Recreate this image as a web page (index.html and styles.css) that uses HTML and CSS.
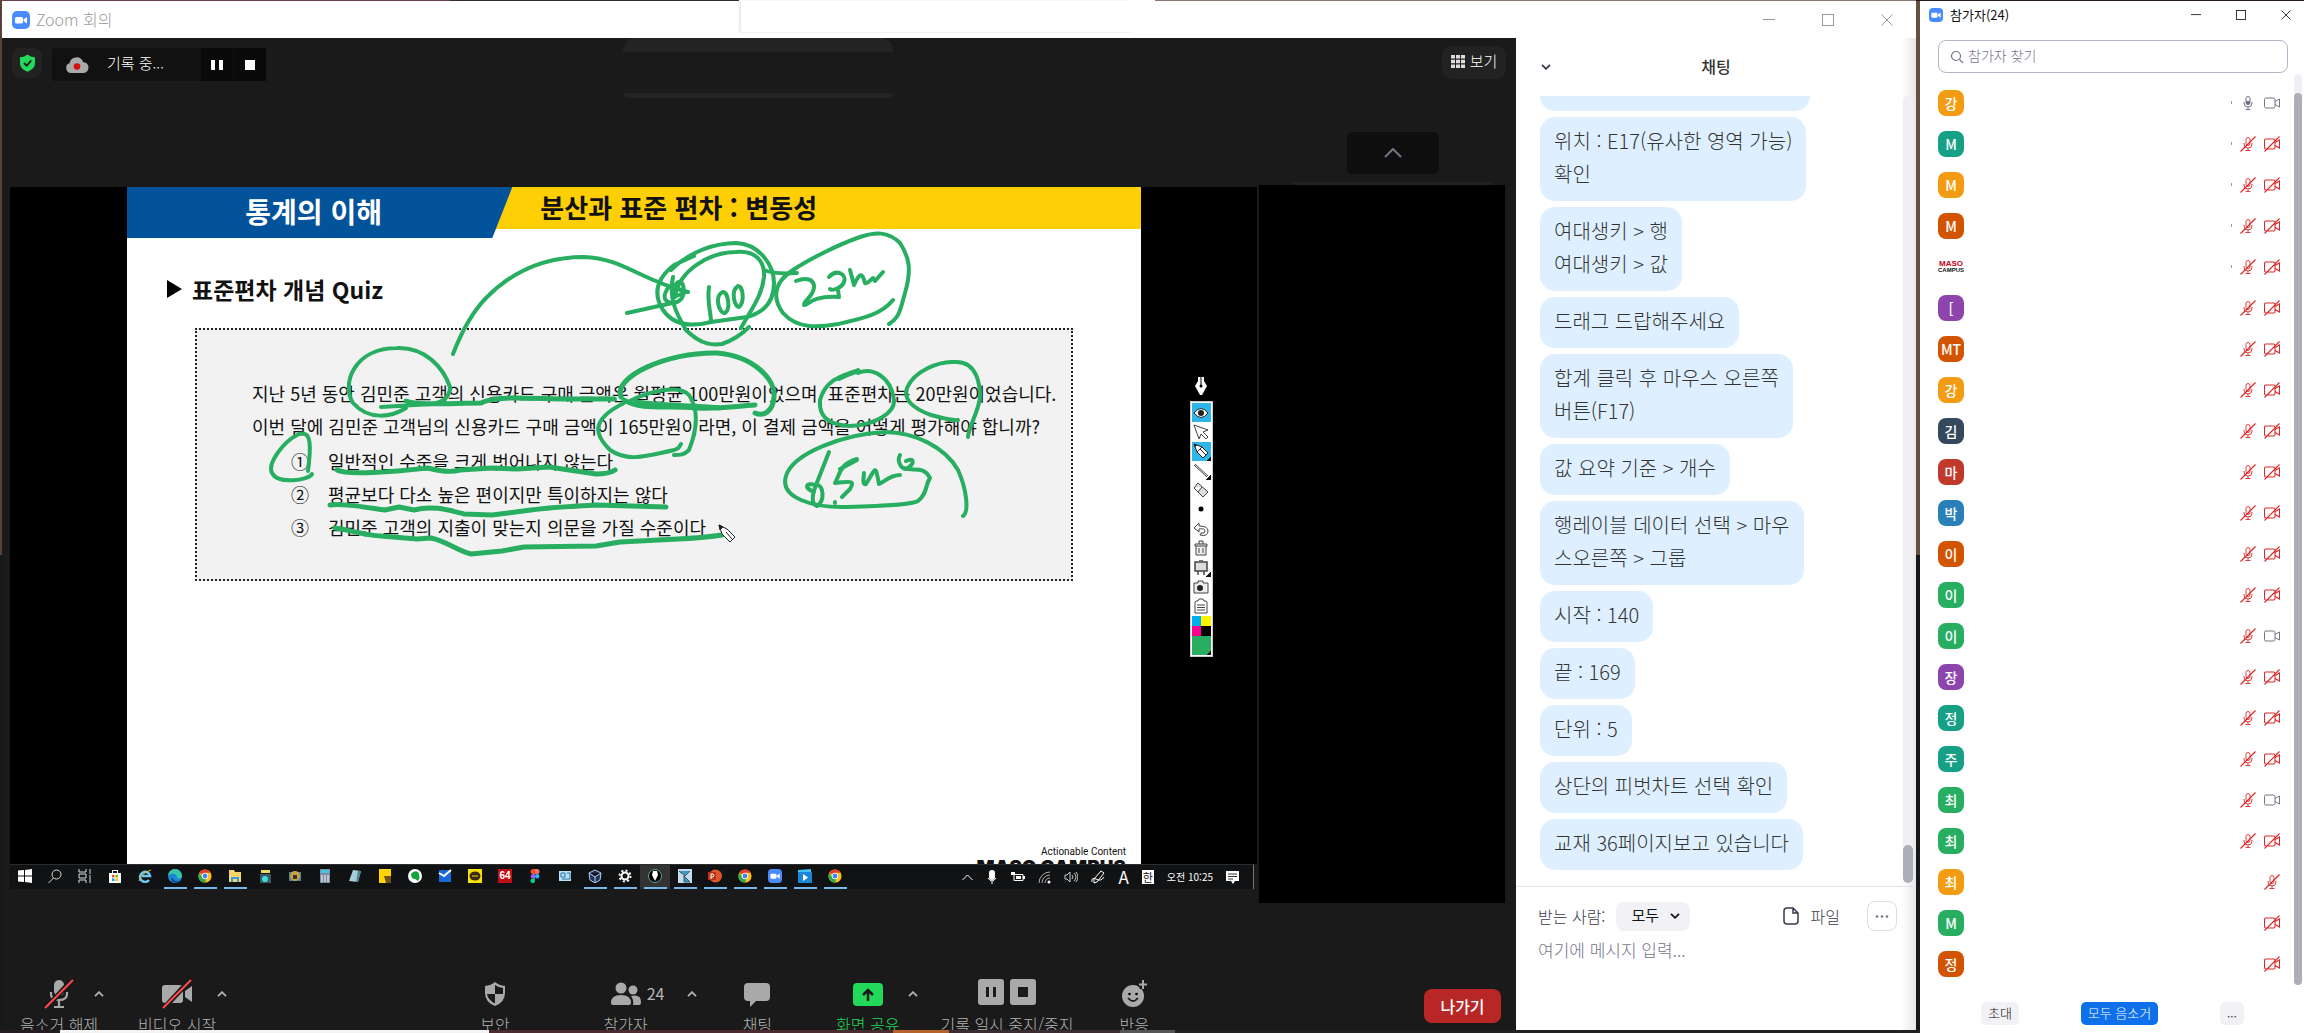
FILE: index.html
```html
<!DOCTYPE html>
<html lang="ko">
<head>
<meta charset="utf-8">
<title>Zoom 회의</title>
<link rel="stylesheet" href="styles.css">
</head>
<body>
<svg class="defs" aria-hidden="true">
  <symbol id="zoom" viewBox="0 0 18 18"><rect width="18" height="18" rx="5" fill="#4a8cff"/><rect x="3" y="6" width="8" height="6.500" rx="1.500" fill="#fff"/><path d="M11.500 8.500 15 6v6.500l-3.500-2.500z" fill="#fff"/></symbol>
  <symbol id="mic" viewBox="0 0 16 16"><g fill="none" stroke="currentColor"><rect x="6" y="1.500" width="4" height="8" rx="2"/><path d="M4 7v1a4 4 0 0 0 8 0V7M8 12v2.500M5.500 14.500h5"/></g><path d="M6 6h4v2a2 2 0 0 1-4 0z" fill="currentColor"/></symbol>
  <symbol id="mic-off" viewBox="0 0 16 16"><g fill="none" stroke="currentColor" stroke-width=".9"><rect x="6" y="1.500" width="4" height="8" rx="2"/><path d="M4 7v1a4 4 0 0 0 8 0V7M8 12v2.500M5.500 14.500h5"/><path d="M.5 15.500 15.500.5" stroke-width="1.200"/></g></symbol>
  <symbol id="cam" viewBox="0 0 16 16"><path d="M2 3h7.500q1.500 0 1.500 1.500v7q0 1.500-1.500 1.500H2Q.5 13 .5 11.500v-7Q.5 3 2 3zM11 6.500l4.500-2.500v8L11 9.500" fill="none" stroke="currentColor"/></symbol>
  <symbol id="cam-off" viewBox="0 0 16 16"><path d="M2 3h7.500q1.500 0 1.500 1.500v7q0 1.500-1.500 1.500H2Q.5 13 .5 11.500v-7Q.5 3 2 3zM11 6.500l4.500-2.500v8L11 9.500M.5 15.500 15.500.5" fill="none" stroke="currentColor" stroke-width="1.100"/></symbol>
  <symbol id="up" viewBox="0 0 10 6"><path d="M1 5.200 5 1.200l4 4" fill="none" stroke="currentColor" stroke-width="1.800"/></symbol>
  <symbol id="down" viewBox="0 0 10 6"><path d="m1 .8 4 4 4-4" fill="none" stroke="currentColor" stroke-width="1.800"/></symbol>
  <symbol id="min" viewBox="0 0 12 12"><path d="M0 5.500h12" stroke="currentColor"/></symbol>
  <symbol id="max" viewBox="0 0 12 12"><rect x=".5" y=".5" width="11" height="11" fill="none" stroke="currentColor"/></symbol>
  <symbol id="close" viewBox="0 0 12 12"><path d="m.5.5 11 11m0-11-11 11" stroke="currentColor"/></symbol>
  <symbol id="chrome" viewBox="0 0 16 16"><circle cx="8" cy="8" r="7.500" fill="#fbc116"/><path d="M8 8 1.500 4.200A7.500 7.500 0 0 1 14.500 4.200H8z" fill="#e33b2e"/><path d="M8 15.500A7.500 7.500 0 0 1 1.500 4.200L5 10.200l4.500 1.500z" fill="#2da94f"/><circle cx="8" cy="8" r="3.600" fill="#fff"/><circle cx="8" cy="8" r="2.800" fill="#4285f4"/></symbol>
</svg>

<div class="desktop">
<main class="meeting-window">
  <header class="titlebar">
    <svg width="18" height="18"><use href="#zoom"/></svg>
    <h1>Zoom 회의</h1>
    <div class="ghost-panel"></div>
    <nav class="win-controls">
      <button aria-label="최소화"><svg width="12" height="12"><use href="#min"/></svg></button>
      <button aria-label="최대화"><svg width="12" height="12"><use href="#max"/></svg></button>
      <button aria-label="닫기"><svg width="12" height="12"><use href="#close"/></svg></button>
    </nav>
  </header>

  <section class="meeting">
    <div class="topbar">
      <button class="shield" aria-label="암호화"><svg width="17" height="18" viewBox="0 0 17 18"><path d="M8.500.5c2 1.700 4.500 2.500 7.500 2.700v6c0 4-3 6.800-7.500 8.500C4 16 1 13.200 1 9.200v-6c3-.2 5.500-1 7.500-2.700z" fill="#22d959"/><path d="m5 9 2.700 2.700L12.200 6.500" stroke="#1a1a1a" stroke-width="1.800" fill="none"/></svg></button>
      <div class="recording">
        <svg width="24" height="18" viewBox="0 0 24 18"><path d="M6 17a5 5 0 0 1-1.500-9.700A7 7 0 0 1 18 6a5.500 5.500 0 0 1 0 11z" fill="#a9a9a9"/><circle cx="12" cy="10.500" r="3.300" fill="#d80f0f"/></svg>
        <span>기록 중...</span>
        <button aria-label="일시 중지"><svg width="12" height="10"><path d="M0 0h4v10H0zM8 0h4v10H8z" fill="#fff"/></svg></button>
        <button aria-label="중지"><svg width="10" height="10"><path d="M0 0h10v10H0z" fill="#fff"/></svg></button>
      </div>
      <div class="notice"><i></i><i></i></div>
      <div class="view-tools">
        <button class="view"><svg width="14" height="13" viewBox="0 0 14 13" fill="#ddd"><path d="M0 0h4v3.500H0zM5 0h4v3.500H5zM10 0h4v3.500h-4zM0 4.700h4v3.500H0zM5 4.700h4v3.500H5zM10 4.700h4v3.500h-4zM0 9.500h4V13H0zM5 9.500h4V13H5zM10 9.500h4V13h-4z"/></svg>보기</button>
        <button class="collapse" aria-label="접기"><svg width="18" height="10" viewBox="0 0 18 10"><path d="m1 9 8-8 8 8" fill="none" stroke="#747487" stroke-width="2"/></svg></button>
        <i class="strip"></i>
      </div>
    </div>

    <div class="stage">
      <div class="shared">
        <div class="screen">
          <article class="slide">
            <header class="slide-head"><h2>통계의 이해</h2><h3>분산과 표준 편차 : 변동성</h3></header>
            <h4><svg width="15" height="18"><path d="M0 0 15 9 0 18z"/></svg>표준편차 개념 Quiz</h4>
            <div class="quiz">
              <p>지난 5년 동안 김민준 고객의 신용카드 구매 금액은 월평균 100만원이었으며, 표준편차는 20만원이었습니다.</p>
              <p>이번 달에 김민준 고객님의 신용카드 구매 금액이 165만원이라면, 이 결제 금액을 어떻게 평가해야 합니까?</p>
              <ul>
                <li><span>①</span>일반적인 수준을 크게 벗어나지 않는다</li>
                <li><span>②</span>평균보다 다소 높은 편이지만 특이하지는 않다</li>
                <li><span>③</span>김민준 고객의 지출이 맞는지 의문을 가질 수준이다</li>
              </ul>
            </div>
            <footer><small>Actionable Content</small><b>MASO CAMPUS</b></footer>
            <svg class="ink" viewBox="127 187 1014 677" preserveAspectRatio="none">
              <g fill="none" stroke="#27ae60" stroke-width="4" stroke-linecap="round" stroke-linejoin="round">
                <path d="M453 354C463 328 476 308 487 297 514 270 548 257 584 257 622 258 642 281 688 292M627 313 677 302"/>
                <path d="M671 270C690 251 716 243 736 243 760 244 774 266 774 283 774 304 762 313 747 317L711 322C688 328 672 323 663 310 651 291 660 276 674 265L694 256"/>
                <path d="M675 297C679 270 710 252 736 252 756 250 765 262 764 277 762 296 752 308 741 328M673 277C668 300 678 316 686 330 702 346 714 345 722 344 734 340 741 335 749 327"/>
                <path d="M668 288C660 300 668 303 674 303 683 301 685 294 683 285 679 276 671 288 673 297M672 286l14 6-12 5M764 270C774 274 784 274 797 273"/>
                <path d="M709 287C707 301 710 308 711 320M723 292C713 296 720 315 725 313 731 309 728 292 723 292M738 286C730 291 735 308 739 307 745 302 743 286 738 286"/>
                <path d="M889 324C900 317 900 310 905 293 912 269 909 257 900 243 888 231 875 232 860 237 837 245 808 260 793 270 771 284 774 301 783 313 798 330 820 327 838 324 861 319 881 315 893 300"/>
                <path d="M796 281C806 277 814 279 814 287 814 296 804 300 804 305 808 306 811 295 839 297L838 290M829 277C837 268 847 275 844 282 842 288 832 291 830 289M850 270 854 285C859 274 862 271 865 283 868 284 869 281 873 278L875 281 883 272"/>
                <path d="M406 408C392 417 369 421 353 403 341 384 354 348 397 348 425 347 443 367 450 387 450 397 444 402 432 404L381 407"/>
                <path stroke-width="5" d="M406 401C419 406 452 403 481 403 497 394 544 400 580 399L614 399"/>
                <path stroke-width="5" d="M621 397C613 377 666 352 717 353 754 356 776 380 774 397 773 411 764 417 755 413M624 400C641 411 670 405 695 408 725 409 735 406 755 405M636 402C670 407 700 405 720 408"/>
                <path d="M628 402C650 390 680 385 689 395 699 410 697 430 689 450 684 455 680 455 674 455M624 403C588 421 596 436 610 450 625 460 637 459 674 450 679 448 678 449 681 444"/>
                <path d="M312 474C309 480 278 485 272 473 267 463 284 441 299 434 312 430 311 448 308 471"/>
                <path stroke-width="5" d="M337 470C348 476 400 471 428 468 439 471 450 473 460 470L492 468 517 469 549 467 596 474Q609 474 615 470M330 505C345 503 370 508 385 510L399 507 414 510C432 505 448 510 464 514L492 515 531 510C552 507 575 506 596 505L666 507M335 528C350 530 367 536 381 536L417 539 431 538C446 541 456 550 471 554L502 551 524 547 596 546 620 542 678 539Q702 538 722 535"/>
                <path d="M839 379C852 372 861 372 858 370 842 376 826 379 820 400 818 424 840 425 850 426 875 425 895 413 894 400 891 376 872 367 858 373"/>
                <path d="M958 420C952 421 943 418 931 415 909 407 904 397 907 388 914 371 939 361 954 362 978 360 980 387 980 397 979 411 968 428 968 437"/>
                <path d="M963 516C969 512 967 490 958 470 945 447 914 432 885 432 844 434 793 453 786 476 779 499 816 508 847 507 882 506 911 505 918 501 928 493 925 485 930 478 923 465 914 472 904 468"/>
                <path d="M829 452 816 485C805 482 804 488 814 492M816 485C824 484 825 501 817 506 811 504 812 495 816 485M857 459C839 464 840 475 835 483 848 482 856 479 850 489L842 497M840 469 857 460M835 502v1M864 473C863 482 863 485 866 484 877 466 875 465 879 484 884 482 890 475 900 475M900 455C896 462 903 472 908 468 915 463 914 457 906 461"/>
              </g>
              <g fill="#fff" stroke="#222"><path d="m719 525 8 4 8 8-5 5-8-8z"/><path d="m726 532 6 7M719 525l4 2-3 3z" fill="#222"/></g>
            </svg>
          </article>
          <aside class="pen-tools">
            <svg width="14" height="19" viewBox="0 0 14 19"><path d="M4 0h6v4l3 5-5 9H6L1 9l3-5z" fill="#fff"/><circle cx="7" cy="9" r="1.500"/><path d="M7 0v8" stroke="#000"/></svg>
            <div class="palette">
              <button class="on" aria-label="보기"><svg width="16" height="16" viewBox="0 0 16 16"><path d="M1 8q7-9 14 0-7 9-14 0z" fill="#fff" stroke="#222"/><circle cx="8" cy="8" r="3" fill="#222"/></svg></button>
              <button aria-label="선택"><svg width="16" height="16" viewBox="0 0 16 16"><path d="m1 1 14 5-5 2 5 5-2 2-5-5-2 5z" fill="#fff" stroke="#444"/></svg></button>
              <button class="on more" aria-label="펜"><svg width="16" height="16" viewBox="0 0 16 16"><path d="m1 1 8 3 6 6-5 5-6-6zM7 6l6 6M4 9l5-5" fill="#fff" stroke="#222"/><path d="m1 1 3 1-2 2z"/></svg></button>
              <button class="more" aria-label="선"><svg width="16" height="16" viewBox="0 0 16 16"><path d="m1 2 13 12M2 1l13 12" stroke="#444"/></svg></button>
              <button aria-label="지우개"><svg width="16" height="16" viewBox="0 0 16 16"><path d="m5 1 10 9-5 5L1 6zM1 6l4 4 4-5" fill="#ddd" stroke="#444"/></svg></button>
              <button aria-label="굵기"><svg width="16" height="16"><circle cx="8" cy="8" r="2.500"/></svg></button>
              <button aria-label="실행 취소"><svg width="16" height="16" viewBox="0 0 16 16"><path d="M6 2 1 7l5 4V8q6-1 6 2 0 3-4 2l-1 2q8 2 8-4 0-5-9-5z" fill="#fff" stroke="#444"/></svg></button>
              <button aria-label="삭제"><svg width="16" height="16" viewBox="0 0 16 16"><path d="M2 4h12v2H2zM3 6v9h10V6M6 4V1h4v3M6 8v5m4-5v5" fill="#eee" stroke="#444"/></svg></button>
              <button class="more" aria-label="칠판"><svg width="16" height="16" viewBox="0 0 16 16"><path d="M2 2h12v9H2zM5 11v4m6-4v4M6 0h4" fill="#ddd" stroke="#444" stroke-width="1.500"/></svg></button>
              <button aria-label="캡처"><svg width="16" height="16" viewBox="0 0 16 16"><path d="M1 4h4V2h5v2h5v10H1z" fill="#eee" stroke="#444"/><circle cx="7" cy="9" r="3" fill="#222"/></svg></button>
              <button aria-label="클립보드"><svg width="16" height="16" viewBox="0 0 16 16"><path d="M3 3h2l1-2h4l1 2h2l1 1v11H2V4zM4 7h8M4 9.500h8M4 12h8" fill="#fff" stroke="#444"/></svg></button>
              <div class="swatches"><i class="cyan"></i><i class="yellow"></i><i class="pink"></i><i class="black"></i><i class="green more"></i></div>
            </div>
          </aside>
        </div>

        <div class="taskbar">
          <ul class="apps">
            <li><svg width="14" height="14" viewBox="0 0 14 14"><path d="M0 1.500 6 1v5.500H0zM7 1l7-1v6.500H7zM0 7.500h6V13l-6-.5zM7 7.500h7V14l-7-1z" fill="#fff"/></svg></li>
            <li><svg width="14" height="14" viewBox="0 0 14 14"><circle cx="8.500" cy="5.500" r="4.500" fill="none" stroke="#ddd"/><path d="m5.500 9-5 5" stroke="#ddd"/></svg></li>
            <li><svg width="14" height="14" viewBox="0 0 14 14"><path d="M1 0v3h7V0M1 5h7v4H1zM1 14v-3h7v3M12 0v3m0 3v8M11 4h2" fill="none" stroke="#ddd"/></svg></li>
            <li><svg width="14" height="14" viewBox="0 0 14 14"><path d="M1 4h12v10H1zM4 4V1h6v3H9V2H5v2z" fill="#fff"/><path d="M4 6h2.500v2.500H4z" fill="#f25022"/><path d="M7.500 6H10v2.500H7.500z" fill="#7fba00"/><path d="M4 9.500h2.500V12H4z" fill="#00a4ef"/><path d="M7.500 9.500H10V12H7.500z" fill="#ffb900"/></svg></li>
            <li><svg width="14" height="14" viewBox="0 0 14 14"><path d="M11 11A5 5 0 1 1 12 7H4" fill="none" stroke="#6cc8f4" stroke-width="2.500"/><path d="M1 12Q3 4 13 1" stroke="#e6c02e" fill="none"/></svg></li>
            <li class="run"><svg width="14" height="14" viewBox="0 0 14 14"><circle cx="7" cy="7" r="7" fill="#1b87d2"/><path d="M0 7a7 7 0 0 1 14 0c0 3-5 3-5 1 0-4-7-4-9-1z" fill="#38c6a6"/><path d="M5 9q0 4 7 3-6 4-9-2z" fill="#0b3f86"/></svg></li>
            <li class="run"><svg width="14" height="14"><use href="#chrome"/></svg></li>
            <li class="run"><svg width="14" height="14" viewBox="0 0 14 14"><path d="M1 1h5l1 2h6v10H1z" fill="#f9d46b"/><path d="M3 8h8v5H9v-3H5v3H3z" fill="#3a9be0"/></svg></li>
            <li><svg width="14" height="14" viewBox="0 0 14 14"><path d="M3 1h9v3H3z" fill="#e9dc62"/><path d="M2 5h11v9H2z" fill="#3c5a5c"/><circle cx="7" cy="10" r="3" fill="#38e0e6"/></svg></li>
            <li><svg width="14" height="14" viewBox="0 0 14 14"><path d="M1 3h12v9H1z" fill="#4d7f9e"/><circle cx="7" cy="7" r="5" fill="#caa13e"/><path d="M5 6h4v4H5z" fill="#333"/></svg></li>
            <li><svg width="14" height="14" viewBox="0 0 14 14"><path d="M2 0h10v14H2z" fill="#7a8da0"/><path d="M3 1h8v3H3z" fill="#44c3e8"/><path d="M4 6v7m3-7v7m3-7v7" stroke="#fff"/></svg></li>
            <li><svg width="14" height="14" viewBox="0 0 14 14"><path d="m5 1 8 1-3 11-9-1z" fill="#a5cfd6"/><path d="m10 2 3 0-3 11-2 0z" fill="#51828f"/></svg></li>
            <li><svg width="14" height="14"><path d="M1 0h12v14H1z" fill="#ffd400"/><path d="M6 7h7v7H8z" fill="#6b5216"/></svg></li>
            <li><svg width="14" height="14"><circle cx="7" cy="7" r="7" fill="#fff"/><path d="M3 5q3-4 7-2 3 5 0 9l-3-2q-4 0-4-5z" fill="#12a33a"/></svg></li>
            <li><svg width="14" height="14"><path d="M1 1h12v12H1z" fill="#1769d8"/><path d="m1 4 5 3 7-6" fill="none" stroke="#fff" stroke-width="2"/></svg></li>
            <li><svg width="14" height="14"><path d="M0 0h14v14H0z" fill="#fae100"/><ellipse cx="7" cy="7" rx="5.500" ry="4.500" fill="#3a2a1c"/><path d="M4 7h6" stroke="#fae100"/></svg></li>
            <li><span class="n64">64</span></li>
            <li><svg width="14" height="14" viewBox="0 0 14 14"><path d="M7 0v5H5a2.500 2.500 0 0 1 0-5z" fill="#f24e1e"/><path d="M7 0h2a2.500 2.500 0 0 1 0 5H7z" fill="#ff7262"/><path d="M7 5v4.500H5A2.200 2.200 0 0 1 5 5z" fill="#a259ff"/><circle cx="9.200" cy="7.200" r="2.200" fill="#1abcfe"/><path d="M7 9.500V12a2.300 2.300 0 1 1-2-2.500z" fill="#0acf83"/></svg></li>
            <li><svg width="14" height="14"><path d="M1 2h12v10H1z" fill="#b9e2f8"/><path d="M3 4h4v4H3zM9 4h3v6H4" fill="none" stroke="#2673a8"/></svg></li>
            <li class="run"><svg width="14" height="14"><path d="m7 1 6 3-1 7-5 3-5-3-1-7zM1 4l6 4 6-4M7 8v6" fill="#1e3357" stroke="#b7cdf0"/></svg></li>
            <li class="run"><svg width="14" height="14"><circle cx="7" cy="7" r="3.500" fill="none" stroke="#fff" stroke-width="2"/><circle cx="7" cy="7" r="5.500" fill="none" stroke="#fff" stroke-width="2" stroke-dasharray="2 2.300"/></svg></li>
            <li class="run active"><svg width="14" height="14"><circle cx="7" cy="7" r="6.500" stroke="#66a0a5"/><path d="M5 2h4l1 4-3 6-3-6z" fill="#fff"/></svg></li>
            <li class="run"><svg width="14" height="14"><path d="M0 0h14v14H0z" fill="#c8dbe6"/><path d="m1 2 6 5 5-5M6 7l6 6H6z" fill="#3a97c7" stroke="#33546b"/></svg></li>
            <li class="run"><svg width="14" height="14"><circle cx="7.500" cy="7" r="6.500" fill="#e0562c"/><path d="M0 3h8v8H0z" fill="#b83214"/><path d="M3 10V5h2q2 1 0 3H3" fill="none" stroke="#fff"/></svg></li>
            <li class="run"><svg width="14" height="14"><use href="#chrome"/></svg></li>
            <li class="run"><svg width="14" height="14"><use href="#zoom"/></svg></li>
            <li class="run"><svg width="14" height="14"><path d="M0 3h14v11H0z" fill="#1c86d6"/><path d="m0 1 13-1v3H0z" fill="#3ec3f0"/><path d="m5 5 5 3.500L5 12z" fill="#fff"/></svg></li>
            <li class="run"><svg width="14" height="14"><use href="#chrome"/></svg></li>
          </ul>
          <ul class="tray">
            <li><svg width="11" height="7"><path d="m.5 6 5-5 5 5" fill="none" stroke="#fff"/></svg></li>
            <li><svg width="12" height="14"><rect x="3" width="6" height="10" rx="3" fill="#fff"/><path d="M2 8q4 6 8 0M6 11v3" stroke="#fff" fill="none"/></svg></li>
            <li><svg width="14" height="12"><path d="M3 3.500h9v6H3z" fill="none" stroke="#fff"/><path d="M5 5h5v3H5zM12 5h2v3h-2zM0 1h4v3H0z" fill="#fff"/></svg></li>
            <li><svg width="13" height="13"><path d="M1 12A11 11 0 0 1 12 1M4 12a8 8 0 0 1 8-8M7 12a5 5 0 0 1 5-5" fill="none" stroke="#aaa"/><circle cx="11" cy="11" r="1.500" fill="#fff"/></svg></li>
            <li><svg width="14" height="12"><path d="M1 4h2l3-3v10L3 8H1zM8 4q2 2 0 4M10 2q4 4 0 8M12 1q4 5 0 10" fill="none" stroke="#ccc"/></svg></li>
            <li><svg width="14" height="14"><path d="M3 9 10 1l3 2-7 9-3 1zM1 12q-1-5 4-3 5 3 8-2" fill="none" stroke="#fff"/></svg></li>
            <li class="ime">A</li>
            <li class="han">한</li>
            <li class="clock">오전 10:25</li>
            <li><svg width="13" height="13"><path d="M0 0h13v10H9l-2 3-2-3H0z" fill="#fff"/><path d="M2 3h9M2 5.500h9M2 8h5" stroke="#333"/></svg></li>
          </ul>
        </div>
      </div>
      <div class="video-strip"></div>
    </div>

    <div class="toolbar">
      <div class="group left">
        <button class="tool"><svg width="30" height="30" viewBox="0 0 30 30"><rect x="10" y="1" width="10" height="16" rx="5" fill="#a9a9a9"/><path d="M7 13v2q0 6 8 6t8-6v-2M15 21v6M10 28h10" fill="none" stroke="#a9a9a9" stroke-width="2.200"/><path d="M2 29 28 1" stroke="#1a1a1a" stroke-width="5"/><path d="M1 29 29 1" stroke="#ff4a4a" stroke-width="2"/></svg><span>음소거 해제</span></button>
        <button class="caret" aria-label="오디오 옵션"><svg width="10" height="6"><use href="#up"/></svg></button>
        <button class="tool"><svg width="32" height="30" viewBox="0 0 32 30"><rect x="1" y="6" width="21" height="18" rx="3" fill="#a9a9a9"/><path d="m24 12 7-5v16l-7-5z" fill="#a9a9a9"/><path d="M3 29 29 1" stroke="#1a1a1a" stroke-width="5"/><path d="M2 29 30 1" stroke="#ff4a4a" stroke-width="2"/></svg><span>비디오 시작</span></button>
        <button class="caret" aria-label="비디오 옵션"><svg width="10" height="6"><use href="#up"/></svg></button>
      </div>
      <div class="group middle">
        <button class="tool"><svg width="24" height="26" viewBox="0 0 24 26"><path d="M12 1q4 3.500 10 4v7q0 9-10 13Q2 21 2 12V5q6-.5 10-4z" fill="#a9a9a9"/><path d="M12 4v9h8V7q-4 0-8-3zM12 13H4q1 6 8 9.500z" fill="#1a1a1a"/></svg><span>보안</span></button>
        <button class="tool people"><svg width="68" height="26" viewBox="0 0 68 26"><g fill="#a9a9a9"><circle cx="29" cy="7" r="5.500"/><circle cx="41" cy="9" r="4.500"/><path d="M19 22q0-8 10-8t10 8q0 2-2 2H21q-2 0-2-2zM41 24q1-5-2-9 10-2 10 6 0 3-2 3z"/></g></svg><b>24</b><span>참가자</span></button>
        <button class="caret" aria-label="참가자 옵션"><svg width="10" height="6"><use href="#up"/></svg></button>
        <button class="tool"><svg width="26" height="26" viewBox="0 0 26 26"><path d="M4 2h18q4 0 4 4v10q0 4-4 4H12l-6 6v-6H4q-4 0-4-4V6q0-4 4-4z" fill="#a9a9a9"/></svg><span>채팅</span></button>
        <button class="tool share"><svg width="30" height="26" viewBox="0 0 30 26"><rect y="2" width="30" height="23" rx="4" fill="#22d959"/><path d="M15 20V9m-5 5 5-5 5 5" fill="none" stroke="#1a1a1a" stroke-width="2.500"/></svg><span>화면 공유</span></button>
        <button class="caret" aria-label="공유 옵션"><svg width="10" height="6"><use href="#up"/></svg></button>
        <button class="tool"><svg width="58" height="30" viewBox="0 0 58 30"><rect width="26" height="26" rx="3" fill="#a9a9a9"/><rect x="32" width="26" height="26" rx="3" fill="#a9a9a9"/><path d="M8 8h3v10H8zM15 8h3v10h-3zM40 8h10v10H40z" fill="#1a1a1a"/></svg><span>기록 일시 중지/중지</span></button>
        <button class="tool"><svg width="26" height="30" viewBox="0 0 26 30"><circle cx="12" cy="17" r="11" fill="#a9a9a9"/><circle cx="8.500" cy="15" r="1.300"/><circle cx="15.500" cy="15" r="1.300"/><path d="M7 19q5 6 10 0" fill="none" stroke="#1a1a1a" stroke-width="1.800"/><path d="M21 1v9M17 5.500h9" stroke="#1a1a1a" stroke-width="5"/><path d="M22 1v9M18 5.500h8" stroke="#a9a9a9" stroke-width="2"/></svg><span>반응</span></button>
      </div>
      <button class="leave">나가기</button>
    </div>
  </section>

  <section class="chat">
    <header><button aria-label="접기"><svg width="10" height="6"><use href="#down"/></svg></button><h2>채팅</h2></header>
    <div class="chat-body">
      <ol class="messages">
        <li class="scrolled" aria-hidden="true"></li>
        <li>위치 : E17(유사한 영역 가능)<br>확인</li>
        <li>여대생키 &gt; 행<br>여대생키 &gt; 값</li>
        <li>드래그 드랍해주세요</li>
        <li>합계 클릭 후 마우스 오른쪽<br>버튼(F17)</li>
        <li>값 요약 기준 &gt; 개수</li>
        <li>행레이블 데이터 선택 &gt; 마우<br>스오른쪽 &gt; 그룹</li>
        <li>시작 : 140</li>
        <li>끝 : 169</li>
        <li>단위 : 5</li>
        <li>상단의 피벗차트 선택 확인</li>
        <li>교재 36페이지보고 있습니다</li>
      </ol>
      <div class="track"><i></i></div>
    </div>
    <form class="composer">
      <div class="to">
        <label for="to">받는 사람:</label>
        <div class="pick"><select id="to"><option>모두</option></select><svg width="10" height="6"><use href="#down"/></svg></div>
        <button type="button" class="file"><svg width="16" height="18" viewBox="0 0 16 18"><path d="M4 1h6l5 5v8q0 3-3 3H4q-3 0-3-3V4q0-3 3-3zM10 1v5h5" fill="none" stroke="#39394d" stroke-width="1.500"/></svg>파일</button>
        <button type="button" class="dots" aria-label="더 보기"><svg width="14" height="3" fill="#747487"><circle cx="2" cy="1.500" r="1.300"/><circle cx="7" cy="1.500" r="1.300"/><circle cx="12" cy="1.500" r="1.300"/></svg></button>
      </div>
      <textarea aria-label="메시지" placeholder="여기에 메시지 입력..."></textarea>
    </form>
  </section>
</main>

<aside class="people-window">
  <header class="titlebar">
    <svg width="14" height="14"><use href="#zoom"/></svg>
    <h2>참가자(24)</h2>
    <nav class="win-controls">
      <button aria-label="최소화"><svg width="10" height="10"><use href="#min"/></svg></button>
      <button aria-label="최대화"><svg width="10" height="10"><use href="#max"/></svg></button>
      <button aria-label="닫기"><svg width="10" height="10"><use href="#close"/></svg></button>
    </nav>
  </header>
  <label class="search"><svg width="14" height="14" viewBox="0 0 14 14"><circle cx="6" cy="6" r="4.500" fill="none" stroke="#747487" stroke-width="1.200"/><path d="m9.500 9.500 3.500 3.500" stroke="#747487" stroke-width="1.200"/></svg><input type="text" aria-label="참가자 찾기" placeholder="참가자 찾기"></label>
  <div class="people-body">
    <ul class="roster">
      <li><span class="av orange">강</span><i class="tick"></i><svg class="gray"><use href="#mic"/></svg><svg class="gray"><use href="#cam"/></svg></li>
      <li><span class="av teal">M</span><i class="tick"></i><svg><use href="#mic-off"/></svg><svg><use href="#cam-off"/></svg></li>
      <li><span class="av orange">M</span><i class="tick"></i><svg><use href="#mic-off"/></svg><svg><use href="#cam-off"/></svg></li>
      <li><span class="av rust">M</span><i class="tick"></i><svg><use href="#mic-off"/></svg><svg><use href="#cam-off"/></svg></li>
      <li><span class="av maso"><b>MASO</b><em>CAMPUS</em></span><i class="tick"></i><svg><use href="#mic-off"/></svg><svg><use href="#cam-off"/></svg></li>
      <li><span class="av purple">[</span><svg><use href="#mic-off"/></svg><svg><use href="#cam-off"/></svg></li>
      <li><span class="av rust">MT</span><svg><use href="#mic-off"/></svg><svg><use href="#cam-off"/></svg></li>
      <li><span class="av orange">강</span><svg><use href="#mic-off"/></svg><svg><use href="#cam-off"/></svg></li>
      <li><span class="av navy">김</span><svg><use href="#mic-off"/></svg><svg><use href="#cam-off"/></svg></li>
      <li><span class="av red">마</span><svg><use href="#mic-off"/></svg><svg><use href="#cam-off"/></svg></li>
      <li><span class="av blue">박</span><svg><use href="#mic-off"/></svg><svg><use href="#cam-off"/></svg></li>
      <li><span class="av rust">이</span><svg><use href="#mic-off"/></svg><svg><use href="#cam-off"/></svg></li>
      <li><span class="av green">이</span><svg><use href="#mic-off"/></svg><svg><use href="#cam-off"/></svg></li>
      <li><span class="av green">이</span><svg><use href="#mic-off"/></svg><svg class="gray"><use href="#cam"/></svg></li>
      <li><span class="av purple">장</span><svg><use href="#mic-off"/></svg><svg><use href="#cam-off"/></svg></li>
      <li><span class="av teal">정</span><svg><use href="#mic-off"/></svg><svg><use href="#cam-off"/></svg></li>
      <li><span class="av teal">주</span><svg><use href="#mic-off"/></svg><svg><use href="#cam-off"/></svg></li>
      <li><span class="av green">최</span><svg><use href="#mic-off"/></svg><svg class="gray"><use href="#cam"/></svg></li>
      <li><span class="av green">최</span><svg><use href="#mic-off"/></svg><svg><use href="#cam-off"/></svg></li>
      <li><span class="av orange">최</span><svg><use href="#mic-off"/></svg></li>
      <li><span class="av green">M</span><svg><use href="#cam-off"/></svg></li>
      <li><span class="av rust">정</span><svg><use href="#cam-off"/></svg></li>
    </ul>
    <div class="track"><i></i></div>
  </div>
  <footer><button>초대</button><button class="primary">모두 음소거</button><button>...</button></footer>
</aside>
</div>
</body>
</html>
```
FILE: styles.css
```css
* { box-sizing: border-box; }
body { margin: 0; font-family: "Noto Sans CJK KR", "Noto Sans", sans-serif; font-size: 16px; line-height: 24px; color: #333; }
h1, h2, h3, h4, p, ul, ol { margin: 0; padding: 0; font-weight: 400; }
ul, ol { list-style: none; }
button, input, select, textarea { font: inherit; color: inherit; border: 0; background: none; padding: 0; margin: 0; }
svg { display: block; flex: none; }
.defs { position: absolute; width: 0; height: 0; }

/* Desktop behind the two windows */
.desktop {
  display: grid; grid-template: minmax(0, 1fr) / minmax(0, 1fr) 384px; column-gap: 4px;
  height: 100vh; min-height: 900px; padding: 1px 0 0 2px; overflow: hidden;
  background:
    linear-gradient(90deg, #241e22 0 60px, #f4f4f4 0 489px, #4a2c30 0 893px, #b5622a 0 949px, #3a2c30 0 1120px, #555 0 1175px, #222 0) bottom / 100% 3px no-repeat,
    linear-gradient(90deg, #6b4048 0 450px, #332c36 0 739px, #fff 0 1155px, #8a7a72 0 1916px, #24171c 0) top / 100% 1px no-repeat,
    linear-gradient(90deg, #5c4038 0 960px, #65503f 0) top / 100% 555px no-repeat,
    #17181c;
}

.titlebar { display: flex; align-items: center; background: #fff; }
.win-controls { display: flex; margin-left: auto; }
.win-controls button { display: grid; place-items: center; }

/* Meeting window */
.meeting-window { display: grid; grid-template: 37px minmax(0, 1fr) / minmax(0, 1fr) 400px; margin-bottom: 3px; min-height: 0; }
.meeting-window > .titlebar { grid-column: 1 / -1; padding-left: 10px; color: #999; }
.meeting-window h1 { font-size: 16px; line-height: 22px; font-weight: 300; margin: 0 0 2px 6px; }
.meeting-window .win-controls button { width: 59px; height: 36px; }
.ghost-panel { width: 390px; height: 31px; align-self: flex-start; margin-left: 629px; box-shadow: -2px 0 2px #e8e8e8, 0 1px #f8f8f8; }
.meeting { display: grid; grid-template-rows: 147px minmax(0, 1fr) 127px; background: #1a1a1a; color: #fff; overflow: hidden; }

.topbar { display: flex; align-items: flex-start; padding: 10px 10px 0; }
.shield { display: grid; place-items: center; width: 30px; height: 30px; border-radius: 8px; background: #222; }
.recording { display: flex; align-items: center; width: 214px; height: 33px; margin-left: 10px; padding-left: 13px; background: #111; border-radius: 3px; font-size: 15px; font-weight: 300; gap: 1px; }
.recording span { flex: 1; padding: 0 0 4px 17px; }
.recording button { display: grid; place-items: center; width: 32px; height: 33px; background: #0a0a0a; }
.notice { display: flex; flex-direction: column; justify-content: space-between; width: 270px; height: 60px; margin: -10px 0 0 357px; }
.notice i { height: 14px; background: #242424; border-radius: 12px 12px 0 0; }
.notice i + i { height: 5px; border-radius: 0 0 8px 8px; }
.view-tools { display: flex; flex-direction: column; align-items: flex-end; margin: -2px 0 0 auto; height: 139px; }
.view { display: flex; align-items: center; justify-content: center; gap: 5px; width: 64px; height: 33px; padding-bottom: 3px; background: #222; border-radius: 10px; font-size: 15px; font-weight: 300; }
.collapse { display: grid; place-items: center; width: 92px; height: 42px; margin: 53px 67px 0 0; background: #0e0e0e; border-radius: 5px; }
.strip { width: 200px; height: 3px; margin: auto 13px 0 0; background: #222; }

.stage { display: flex; gap: 2px; padding: 0 11px 0 8px; min-height: 0; }
.video-strip { flex: none; width: 246px; background: #000; }
.shared { flex: 1; min-width: 0; display: flex; flex-direction: column; padding: 2px 0 14px; }
.screen { flex: 1; min-height: 0; display: flex; background: #000; padding-left: 117px; }

/* Slide */
.slide { position: relative; flex: 1; min-width: 0; display: flex; flex-direction: column; background: #fff; color: #111; overflow: hidden; }
.slide-head { display: flex; height: 51px; }
.slide-head h2 { position: relative; z-index: 1; width: 38%; padding-right: 12px; background: #02539a; color: #fff; text-align: center; font-size: 28px; line-height: 48px; font-weight: 700; clip-path: polygon(0 0, 100% 0, calc(100% - 20px) 100%, 0 100%); }
.slide-head h3 { flex: 1; height: 42px; margin-left: -20px; padding-left: 48px; background: #ffcf06; font-size: 26px; line-height: 40px; font-weight: 700; }
.slide h4 { display: flex; align-items: center; gap: 10px; margin: 35px 0 0 40px; font-size: 23px; line-height: 32px; font-weight: 700; }
.quiz { flex: none; margin: 23px 68px 0; height: 253px; padding: 47px 0 0 55px; border: 2px dotted #222; background: #f2f2f2; font-size: 18px; line-height: 33px; font-weight: 300; white-space: nowrap; }
.quiz ul { padding: 2px 0 0 39px; }
.quiz span { display: inline-block; width: 37px; }
.slide footer { display: flex; flex-direction: column; align-items: flex-end; height: 18px; margin-top: auto; padding-right: 15px; }
.slide small { font: 10px/12px Roboto, sans-serif; flex: none; }
.slide footer b { flex: none; font: 900 19px/20px Inter, sans-serif; }
.ink { position: absolute; inset: 0; width: 100%; height: 100%; }

.pen-tools { display: flex; flex-direction: column; align-items: center; gap: 5px; width: 116px; padding: 190px 0 0 4px; }
.palette { width: 23px; padding: 1px; background: #fff; border: 1px solid #ccc; display: grid; grid-template-rows: repeat(11, 1fr) 39px; height: 256px; }
.palette button { position: relative; display: grid; place-items: center; min-height: 0; }
.palette .on { background: #2fb6e9; }
.palette .more { background-image: linear-gradient(135deg, transparent 50%, #111 50%); background-size: 5px 5px; background-position: right bottom; background-repeat: no-repeat; }
.swatches { display: grid; grid-template: 10px 10px 19px / 1fr 1fr; }
.cyan { background: #00aeef; } .yellow { background: #fff200; } .pink { background: #ff0090; } .black { background: #000; }
.swatches .green { grid-column: 1 / -1; background-color: #27ae60; }

/* Windows taskbar inside the share */
.taskbar { flex: none; display: flex; align-items: stretch; justify-content: space-between; height: 25px; background: #111214; border-top: 1px solid #2c2d2f; border-right: 1px solid #777; margin-right: 3px; }
.taskbar ul { display: flex; }
.apps li { width: 30px; display: grid; place-items: center; border-bottom: 2px solid transparent; background-clip: padding-box; }
.apps .run { background: linear-gradient(#76b9ed, #76b9ed) bottom / 23px 2px no-repeat border-box; }
.apps .active { background-color: #333; }
.n64 { width: 14px; height: 14px; background: #c00d16; color: #fff; font: 700 10px/14px "Liberation Sans", sans-serif; text-align: center; }
.tray { align-items: center; gap: 13px; padding-right: 14px; color: #fff; font-size: 11px; line-height: 14px; }
.tray .ime { font-size: 17px; }
.tray .han { background: #fff; color: #111; width: 12px; text-align: center; }
.tray .clock { font-size: 10px; }

/* Meeting controls */
.toolbar { display: flex; align-items: flex-start; padding: 76px 15px 0 0; color: #b4b4b4; }
.group { display: flex; }
.tool { display: grid; grid-template-rows: 30px 24px; justify-items: center; align-items: center; row-gap: 3px; white-space: nowrap; position: relative; font-weight: 300; }
.tool span { line-height: 24px; }
.left { padding-left: 18px; }
.caret { width: 10px; height: 30px; display: grid; place-items: center; }
.left .caret { margin-left: -4px; }
.left .caret + .tool { margin-left: 34px; }
.left .tool + .caret:last-child { margin-left: 1px; }
.middle { margin-left: 253px; }
.middle .people { margin-left: 82px; }
.people b { position: absolute; left: 55px; top: 2px; font-weight: 400; font-size: 16px; }
.middle .people + .caret { margin-left: 27px; }
.middle .caret + .tool { margin-left: 46px; }
.middle .share { margin-left: 64px; color: #22d959; }
.middle .share + .caret { margin-left: 9px; }
.middle .share + .caret + .tool { margin-left: 22px; }
.middle .share + .caret + .tool + .tool { margin-left: 46px; }
.leave { width: 77px; height: 34px; margin: 10px 0 0 auto; background: #b92626; color: #fff; border-radius: 8px; font-weight: 500; line-height: 30px; }

/* Chat */
.chat { display: flex; flex-direction: column; min-height: 0; background: linear-gradient(90deg, #fff 385px, #e8e8e8); color: #39394d; }
.chat > header { display: grid; grid-template-columns: 60px 1fr 60px; align-items: center; height: 58px; }
.chat h2 { text-align: center; font-size: 16px; line-height: 20px; padding-bottom: 3px; font-weight: 500; color: #333; }
.chat > header button { display: grid; place-items: center; }
.chat-body { flex: 1; min-height: 0; display: flex; border-bottom: 1px solid #e4e4ed; }
.messages { flex: 1; display: flex; flex-direction: column; justify-content: flex-end; align-items: flex-start; gap: 6px; padding: 0 0 16px 24px; overflow: hidden; }
.messages li { flex: none; padding: 7px 14px 11px; border-radius: 15px; background: #def0ff; font-size: 20px; line-height: 33px; font-weight: 300; color: #333; }
.messages .scrolled { width: 270px; height: 51px; }
.track { flex: none; border-radius: 5px; background: #efeff5; display: flex; flex-direction: column; }
.track i { display: block; border-radius: 5px; background: #aeaeb8; }
.chat .track { width: 10px; margin: 0 3px 3px 0; justify-content: flex-end; }
.chat .track i { height: 38px; }
.composer { height: 143px; padding: 14px 19px 0 22px; display: flex; flex-direction: column; }
.to { display: flex; align-items: center; font-weight: 300; }
.pick { position: relative; margin-left: 11px; width: 74px; height: 29px; border-radius: 8px; background: #f1f1f6; display: flex; align-items: center; color: #131619; }
.pick select { appearance: none; width: 100%; height: 29px; padding: 0 0 2px 15px; font-size: 15px; font-weight: 400; }
.pick svg { position: absolute; right: 10px; pointer-events: none; }
.file { display: flex; align-items: center; gap: 12px; margin-left: auto; }
.dots { display: grid; place-items: center; width: 30px; height: 30px; margin-left: 27px; border: 1px solid #dcdce6; border-radius: 8px; }
.composer textarea { flex: 1; resize: none; margin-top: 7px; font-size: 17px; font-weight: 300; outline: 0; }
::placeholder { color: #747487; opacity: 1; }

/* Participants */
.people-window { display: flex; flex-direction: column; min-height: 0; background: #fff; color: #111; }
.people-window .titlebar { height: 28px; padding-left: 9px; }
.people-window h2 { font-size: 13px; margin-left: 7px; }
.people-window .win-controls button { width: 45px; height: 28px; }
.people-window .win-controls { margin-right: -4px; }
.search { display: flex; align-items: center; gap: 4px; height: 33px; margin: 11px 16px 0 18px; padding: 0 11px; border: 1px solid #b4b4c8; border-radius: 8px; }
.search input { flex: 1; min-width: 0; height: 26px; font-size: 14px; font-weight: 300; padding-bottom: 4px; outline: 0; }
.people-body { flex: 1; min-height: 0; display: flex; overflow: hidden; padding-top: 1px; }
.roster { flex: 1; padding: 8px 14px 0 18px; }
.roster li { display: flex; align-items: center; gap: 8px; height: 41px; }
.roster svg { width: 16px; height: 16px; color: #de2828; }
.roster .gray { color: #747487; }
.tick { width: 1px; height: 3px; background: #999; }
.av { display: grid; place-items: center; width: 26px; height: 26px; margin-right: auto; border-radius: 8px; color: #fff; font-size: 14px; line-height: 24px; font-weight: 500; }
.orange { background: #f39c12; } .teal { background: #16a085; } .rust { background: #d35400; } .purple { background: #8e44ad; }
.navy { background: #34495e; } .red { background: #c0392b; } .blue { background: #2980b9; } .av.green { background: #27ae60; }
.maso { align-content: center; font: 700 7px/7px "Liberation Sans", sans-serif; }
.maso b { color: #c80014; font-size: 8px; } .maso em { color: #111; font-size: 6px; font-style: normal; }
.people-body .track { width: 8px; margin-right: 2px; }
.people-body .track i { flex: 1; margin-top: 19px; }
.people-window footer { display: flex; justify-content: space-between; height: 48px; padding: 17px 60px 0 61px; }
.people-window footer button { height: 23px; min-width: 24px; padding: 0 7px 2px; background: #f1f1f6; border-radius: 5px; font-size: 13px; line-height: 20px; font-weight: 300; }
.people-window footer .primary { background: #0e71eb; color: #fff; }
```
